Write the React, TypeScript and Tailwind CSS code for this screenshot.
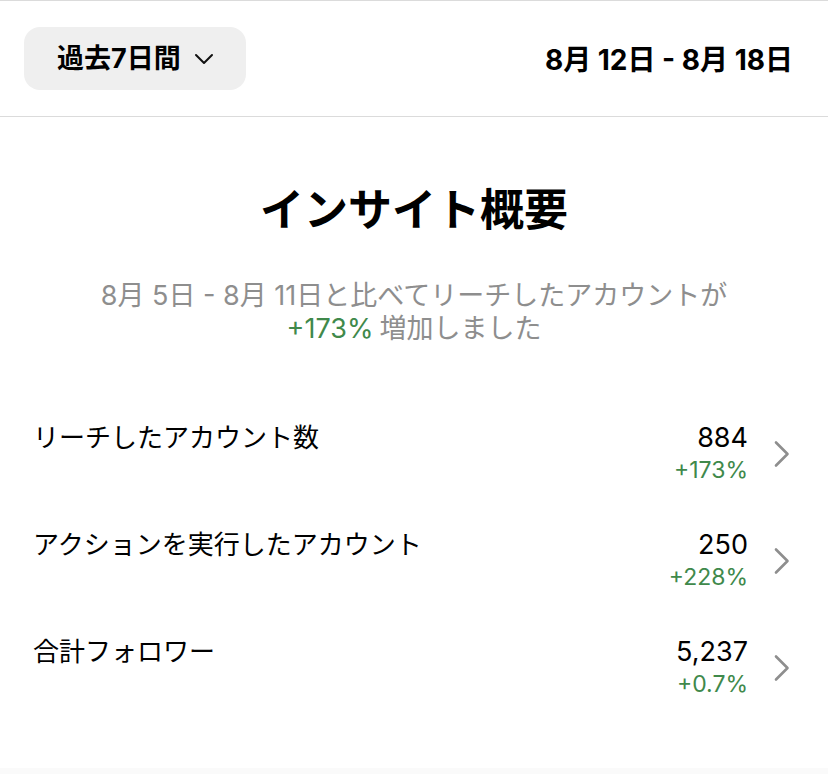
type Metric = {
    label: string;
    value: string;
    change: string;
};

const metrics: Metric[] = [
    { label: 'リーチしたアカウント数', value: '884', change: '+173%' },
    { label: 'アクションを実行したアカウント', value: '250', change: '+228%' },
    { label: '合計フォロワー', value: '5,237', change: '+0.7%' },
];

function ChevronRight() {
    return (
        <svg width="18" height="28" viewBox="0 0 18 28" fill="none" className="shrink-0">
            <path d="M3 2.5 L14.5 14 L3 25.5" stroke="#8e8e8e" strokeWidth="2.6" strokeLinecap="round" strokeLinejoin="round" />
        </svg>
    );
}

function ChevronDown() {
    return (
        <svg width="20" height="12" viewBox="0 0 20 12" fill="none">
            <path d="M2 2 L10 10 L18 2" stroke="#111" strokeWidth="2" strokeLinecap="round" strokeLinejoin="round" />
        </svg>
    );
}

export default function App() {
    return (
        <div
            className="flex h-[774px] w-full flex-col bg-white text-black"
            style={{ fontFamily: 'Inter, "Noto Sans CJK JP", sans-serif' }}
        >
            <div className="flex-1">
                {/* header */}
                <div className="flex h-[117px] items-center justify-between border-y border-[#dbdbdb] pl-[24px] pr-[35px]">
                    <button className="flex h-[63px] w-[222px] items-center gap-[13px] rounded-[16px] bg-[#efefef] pl-[33px]">
                        <span className="text-[27px] font-bold leading-none">過去7日間</span>
                        <ChevronDown />
                    </button>
                    <div className="pt-[3px] text-[28px] font-bold leading-none">8月 12日 - 8月 18日</div>
                </div>

                {/* summary */}
                <h1 className="mt-[67px] text-center text-[44px] font-bold leading-[53px]">インサイト概要</h1>
                <p className="mt-[42px] text-center text-[27px] leading-[33px] text-[#8e8e8e]">
                    8月 5日 - 8月 11日と比べてリーチしたアカウントが
                    <br />
                    <span className="mr-[6px] text-[#40894b]">+173%</span>増加しました
                </p>

                {/* metrics */}
                <div className="mt-[77px] flex flex-col gap-[43px] pl-[33px] pr-[37px]">
                    {metrics.map((m) => (
                        <div key={m.label} className="flex items-start justify-between">
                            <div className="text-[26px] leading-[32px]">{m.label}</div>
                            <div className="flex items-center gap-[25px]">
                                <div className="flex flex-col items-end">
                                    <span className="text-[27px] leading-[32px]">{m.value}</span>
                                    <span className="text-[23px] leading-[32px] text-[#40894b]">{m.change}</span>
                                </div>
                                <ChevronRight />
                            </div>
                        </div>
                    ))}
                </div>
            </div>
            <div className="h-[6px] bg-[#fafafa]" />
        </div>
    );
}
